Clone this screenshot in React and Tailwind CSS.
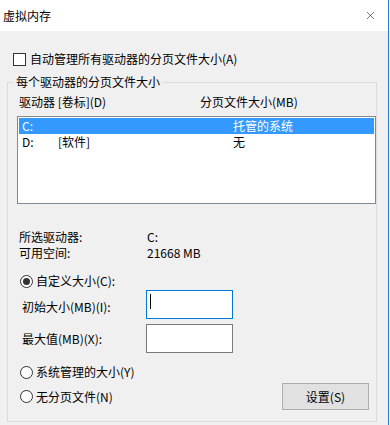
import { X } from "lucide-react";

const font = { fontFamily: '"Microsoft YaHei UI", "Noto Sans CJK SC", sans-serif' };

function Radio({ checked, label }) {
  return (
    <div className="flex items-center h-[16px]">
      <span className="w-[13px] h-[13px] rounded-full border border-[#333333] bg-white flex items-center justify-center">
        {checked && <span className="w-[7px] h-[7px] rounded-full bg-[#333333]" />}
      </span>
      <span className="ml-[3px]">{label}</span>
    </div>
  );
}

function DriveRow({ drive, label, size, selected }) {
  return (
    <div
      className={
        "flex items-center h-[16px] pl-[3px] " +
        (selected ? "bg-[#3399ff] text-white" : "text-black")
      }
    >
      <span className="w-[36px]">{drive}</span>
      <span className="w-[175px]">{label}</span>
      <span>{size}</span>
    </div>
  );
}

export default function App() {
  return (
    <div className="w-[390px] h-[425px] bg-white overflow-hidden" style={font}>
      <div className="w-[389px] h-[425px] bg-[#f0f0f0] border-r border-[#1c7fd6] text-[12px] leading-[16px] text-black">
        {/* title bar */}
        <div className="h-[31px] bg-white flex items-center justify-between pl-[3px] pr-[11px]">
          <span>虚拟内存</span>
          <X size={13} strokeWidth={1} className="text-black" />
        </div>

        {/* auto manage */}
        <div className="flex items-center h-[16px] mt-[20px] pl-[13px]">
          <span className="w-[13px] h-[13px] border border-[#333333] bg-white" />
          <span className="ml-[4px]">自动管理所有驱动器的分页文件大小(A)</span>
        </div>

        <fieldset className="ml-[7px] mt-[7px] w-[368px] h-[348px] border border-[#dcdcdc] rounded-none">
          <legend className="ml-[6px] px-[2px] leading-[16px]">每个驱动器的分页文件大小</legend>

          <div className="flex items-center h-[16px] mt-[4px] pl-[11px]">
            <span className="w-[181px]">驱动器 [卷标](D)</span>
            <span>分页文件大小(MB)</span>
          </div>

          <div className="ml-[9px] mt-[6px] w-[359px] h-[88px] border border-[#828790] bg-white p-[1px]">
            <DriveRow drive="C:" label="" size="托管的系统" selected />
            <DriveRow drive="D:" label="[软件]" size="无" />
          </div>

          <div className="mt-[25px] pl-[11px]">
            <div className="flex h-[16px] items-center">
              <span className="w-[128px]">所选驱动器:</span>
              <span>C:</span>
            </div>
            <div className="flex h-[16px] items-center">
              <span className="w-[128px]">可用空间:</span>
              <span>21668 MB</span>
            </div>
          </div>

          <div className="mt-[12px] pl-[12px]">
            <Radio checked label="自定义大小(C):" />
          </div>

          <div className="mt-[1px] pl-[14px] flex items-center h-[29px]">
            <span className="w-[124px] pt-[5px]">初始大小(MB)(I):</span>
            <div className="w-[87px] h-[29px] border border-[#0078d7] bg-white pl-[3px] pt-[3px]">
              <div className="w-[1px] h-[15px] bg-black" />
            </div>
          </div>

          <div className="mt-[5px] pl-[14px] flex items-center h-[29px]">
            <span className="w-[124px]">最大值(MB)(X):</span>
            <div className="w-[87px] h-[29px] border border-[#7a7a7a] bg-white" />
          </div>

          <div className="mt-[11px] pl-[12px]">
            <Radio label="系统管理的大小(Y)" />
          </div>

          <div className="mt-[3px] pl-[12px] flex items-center h-[27px]">
            <Radio label="无分页文件(N)" />
            <button className="ml-auto mr-[7px] w-[87px] h-[27px] bg-[#e1e1e1] border border-[#adadad] text-black">
              设置(S)
            </button>
          </div>
        </fieldset>
      </div>
    </div>
  );
}
